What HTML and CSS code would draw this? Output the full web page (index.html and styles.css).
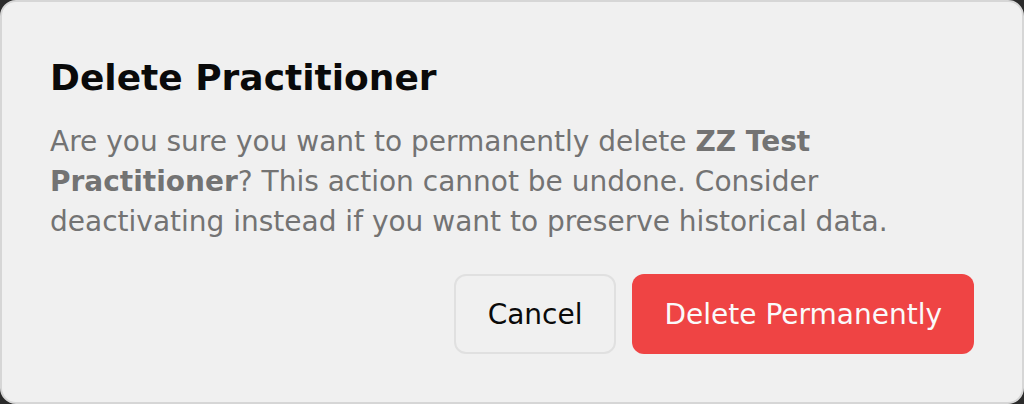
FILE: index.html
```html
<!DOCTYPE html>
<html lang="en">
<head>
<meta charset="utf-8">
<title>Delete Practitioner</title>
<link rel="stylesheet" href="styles.css">
</head>
<body>
<div class="dialog" role="alertdialog">
  <div class="header">
    <h2 class="title">Delete Practitioner</h2>
    <p class="desc">Are you sure you want to permanently delete <strong>ZZ Test Practitioner</strong>? This action cannot be undone. Consider deactivating instead if you want to preserve historical data.</p>
  </div>
  <div class="footer">
    <button class="btn btn-outline">Cancel</button>
    <button class="btn btn-danger">Delete Permanently</button>
  </div>
</div>
</body>
</html>
```
FILE: styles.css
```css
html, body {
  margin: 0;
  padding: 0;
  height: 100%;
  background: #2b2b2b;
}
body {
  font-family: "DejaVu Sans", sans-serif;
}
.dialog {
  box-sizing: border-box;
  width: 1024px;
  height: 404px;
  background: #f0f0f0;
  border: 2px solid #d6d6d6;
  border-radius: 16px;
  padding: 48px;
  display: flex;
  flex-direction: column;
  gap: 32px;
}
.header {
  display: flex;
  flex-direction: column;
  gap: 16px;
}
.title {
  margin: 0;
  font-size: 36px;
  line-height: 56px;
  font-weight: 700;
  color: #0a0a0a;
}
.desc {
  margin: 0;
  font-size: 28px;
  line-height: 40px;
  color: #737373;
}
.desc strong {
  font-weight: 700;
}
.footer {
  display: flex;
  justify-content: flex-end;
  gap: 16px;
}
.btn {
  box-sizing: border-box;
  height: 80px;
  padding: 0 32px;
  border-radius: 12px;
  font-family: "DejaVu Sans", sans-serif;
  font-size: 28px;
  cursor: pointer;
}
.btn-outline {
  background: #f0f0f0;
  border: 2px solid #e0e0e0;
  color: #0a0a0a;
}
.btn-danger {
  background: #ef4444;
  border: 0;
  color: #fafafa;
}
```
